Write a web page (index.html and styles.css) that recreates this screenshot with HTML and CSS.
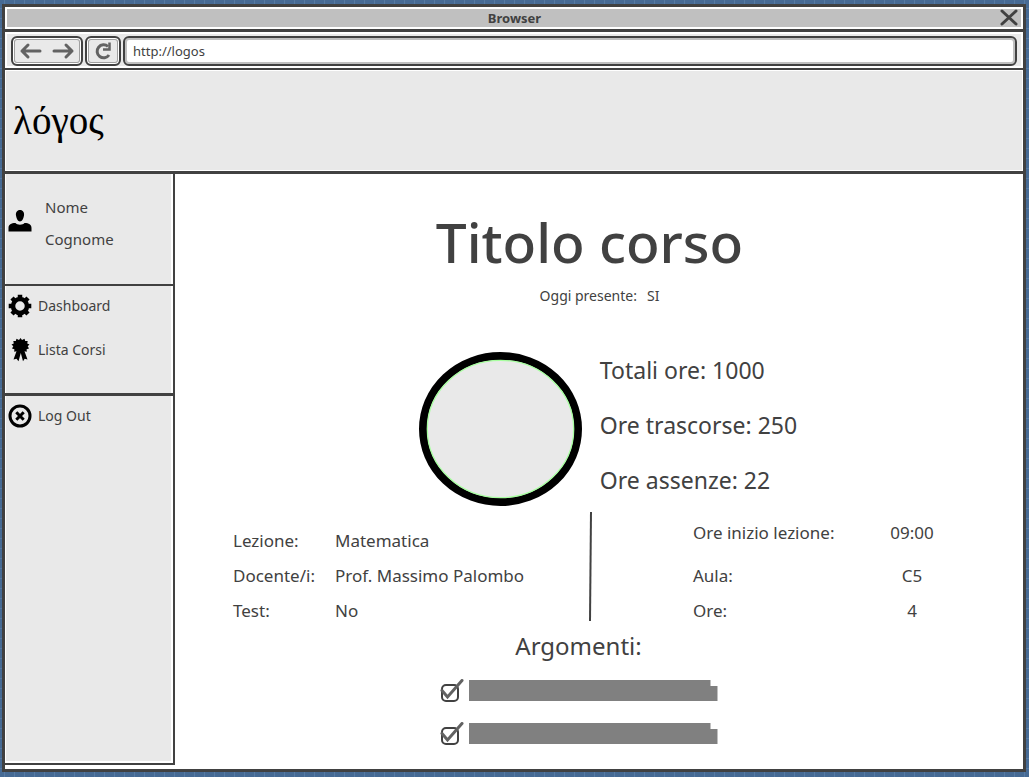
FILE: index.html
```html
<!DOCTYPE html>
<html lang="it">
<head>
<meta charset="utf-8">
<meta name="viewport" content="width=device-width, initial-scale=1">
<title>λόγος</title>
<link rel="stylesheet" href="styles.css">
</head>
<body>
<div class="window">
  <div class="titlebar">
    <span class="titlebar-text">Browser</span>
    <button class="close" type="button" aria-label="Chiudi">
      <svg width="18" height="18" viewBox="0 0 18 18"><path d="M2 2L16 15M16 2L2 15" fill="none" stroke="#414141" stroke-width="3" stroke-linecap="round"/></svg>
    </button>
  </div>
  <div class="toolbar">
    <div class="tool-box">
      <button class="tool" type="button" aria-label="Indietro">
        <svg width="24" height="18" viewBox="0 0 24 18"><path d="M21 9H3M9 3L3 9L9 15" fill="none" stroke="#626262" stroke-width="3" stroke-linecap="round" stroke-linejoin="round"/></svg>
      </button>
      <button class="tool" type="button" aria-label="Avanti">
        <svg width="24" height="18" viewBox="0 0 24 18"><path d="M3 9H21M15 3L21 9L15 15" fill="none" stroke="#626262" stroke-width="3" stroke-linecap="round" stroke-linejoin="round"/></svg>
      </button>
    </div>
    <div class="tool-box">
      <button class="tool" type="button" aria-label="Ricarica">
        <svg width="20" height="20" viewBox="0 0 20 20"><path d="M16 14A6.500 6.500 0 1 1 15 5.500" fill="none" stroke="#626262" stroke-width="3"/><path d="M16.500 1.500V8.500H10" fill="none" stroke="#626262" stroke-width="2.500"/></svg>
      </button>
    </div>
    <input class="address" type="text" value="http://logos" aria-label="Indirizzo">
  </div>
  <header class="site-header"><a class="logo" href="#">λόγος</a></header>
  <div class="page">
    <nav class="sidebar">
      <div class="user">
        <svg width="24" height="24" viewBox="0 0 24 24"><path d="M12 1C15 1 16.500 3.500 16 6.500C15.500 9.500 14 12.500 12 12.500S8.500 9.500 8 6.500C7.500 3.500 9 1 12 1ZM.5 22.500V19C.5 15.500 3 14 7.500 14C9 16.200 15 16.200 16.500 14C21 14 23.500 15.500 23.500 19V22.500Z"/></svg>
        <p class="user-name">Nome<br>Cognome</p>
      </div>
      <div class="links">
        <a class="link" href="#">
          <svg width="24" height="24" viewBox="0 0 24 24"><g fill="none" stroke="#000"><circle cx="12" cy="12" r="7" stroke-width="4.500"/><path d="M12 .7V4M12 20V23.300M.7 12H4M20 12H23.300M4 4L6.500 6.500M17.500 17.500L20 20M4 20L6.500 17.500M17.500 6.500L20 4" stroke-width="4.500"/></g></svg>
          Dashboard
        </a>
        <a class="link" href="#">
          <svg width="24" height="24" viewBox="0 0 24 24"><path d="M12.500 0L14 2L16.500 .8L17.200 3L19.700 3L19.200 5.400L21.500 6.500L19.700 8.300L21 10.500L18.600 11.300L18.800 13.800L16.500 13.300L19.500 21.500L16.700 20.800L15 23.300L12.800 15L10.500 23.300L8.500 20.800L5.500 21.500L8.500 13.300L6.200 13.800L6.400 11.300L4 10.500L5.300 8.300L3.500 6.500L5.800 5.400L5.300 3L7.800 3L8.500 .8L11 2Z"/></svg>
          Lista Corsi
        </a>
      </div>
      <div class="links links-exit">
        <a class="link" href="#">
          <svg width="24" height="24" viewBox="0 0 24 24"><g fill="none" stroke="#000" stroke-width="3"><circle cx="12" cy="12" r="10"/><path d="M8.300 8.300L15.700 15.700M15.700 8.300L8.300 15.700"/></g></svg>
          Log Out
        </a>
      </div>
    </nav>
    <main class="content">
      <h1 class="title">Titolo corso</h1>
      <p class="presence"><span>Oggi presente:</span><span>SI</span></p>
      <section class="summary">
        <svg class="chart" width="163" height="154" viewBox="0 0 163 154" role="img" aria-label="Ore"><ellipse cx="81.500" cy="77" rx="77.500" ry="73" fill="#e9e9e9" stroke="#000" stroke-width="8"/><ellipse cx="81.500" cy="77" rx="73.200" ry="68.700" fill="none" stroke="#a8ffa0" stroke-width="1.300"/></svg>
        <ul class="stats">
          <li>Totali ore: 1000</li>
          <li>Ore trascorse: 250</li>
          <li>Ore assenze: 22</li>
        </ul>
      </section>
      <section class="details">
        <dl class="facts">
          <dt>Lezione:</dt><dd>Matematica</dd>
          <dt>Docente/i:</dt><dd>Prof. Massimo Palombo</dd>
          <dt>Test:</dt><dd>No</dd>
        </dl>
        <svg class="divider" width="6" height="109" viewBox="0 0 6 109"><path d="M4 0L3 109" stroke="#414141" stroke-width="2"/></svg>
        <dl class="facts facts-time">
          <dt>Ore inizio lezione:</dt><dd>09:00</dd>
          <dt>Aula:</dt><dd>C5</dd>
          <dt>Ore:</dt><dd>4</dd>
        </dl>
      </section>
      <section class="topics">
        <h2 class="topics-title">Argomenti:</h2>
        <label class="topic">
          <span class="check"><input class="check-box" type="checkbox" checked aria-label="Argomento 1"><svg class="tick" width="24" height="22" viewBox="0 0 24 22"><path d="M2 11.500L7.500 18L22 1.500" fill="none" stroke="#626262" stroke-width="3" stroke-linecap="round"/></svg></span>
          <span class="bar"></span>
        </label>
        <label class="topic">
          <span class="check"><input class="check-box" type="checkbox" checked aria-label="Argomento 2"><svg class="tick" width="24" height="22" viewBox="0 0 24 22"><path d="M2 11.500L7.500 18L22 1.500" fill="none" stroke="#626262" stroke-width="3" stroke-linecap="round"/></svg></span>
          <span class="bar"></span>
        </label>
      </section>
    </main>
  </div>
</div>
</body>
</html>
```

FILE: styles.css
```css
:root {
  --ink: #414141;
  --panel: #e9e9e9;
}

* {
  box-sizing: border-box;
}

body {
  margin: 0;
  min-height: 100vh;
  display: flex;
  padding: 4px 3px 5px 2px;
  color: var(--ink);
  font-family: "Comic Sans MS", "Noto Sans", sans-serif;
  font-size: 17px;
  background-color: #466a94;
  background-image:
    linear-gradient(90deg, transparent 4px, #567aa3 4px, #567aa3 5px, transparent 5px),
    linear-gradient(transparent 8px, #567aa3 8px, #567aa3 9px, transparent 9px);
  background-size: 10px 10px;
}

p, h1, h2, ul, dl, dd {
  margin: 0;
  padding: 0;
}

h1, h2 {
  font-weight: 400;
}

button {
  padding: 0;
  border: 0;
  background: none;
  font: inherit;
}

svg {
  display: block;
  flex: none;
}

.window {
  flex: 1;
  display: flex;
  flex-direction: column;
  border: 3px solid var(--ink);
  background: #fff;
}

.titlebar {
  display: flex;
  align-items: center;
  height: 25px;
  border-bottom: 3px solid var(--ink);
  background: #c0c0c0;
  box-shadow: inset 0 0 0 2px #fff;
}

.titlebar-text {
  flex: 1;
  padding-left: 24px;
  text-align: center;
  font-size: 13px;
  line-height: 22px;
  font-weight: 700;
}

.close {
  margin-right: 5px;
}

.toolbar {
  display: flex;
  gap: 2px;
  padding: 4px 6px 2px;
  border-bottom: 2px solid var(--ink);
  background: var(--panel);
  box-shadow: inset 0 0 0 2px #fff;
}

.tool-box {
  display: flex;
  align-items: center;
  gap: 8px;
  height: 30px;
  padding: 0 6px;
  border: 2px solid var(--ink);
  border-radius: 6px;
  box-shadow: inset 0 0 0 1px #fff, inset 0 0 0 2px #a0a0a0;
}

.address {
  flex: 1;
  min-width: 0;
  height: 30px;
  padding: 0 8px;
  border: 2px solid var(--ink);
  border-radius: 6px;
  box-shadow: inset 0 0 0 2px #c0c0c0;
  background: #fff;
  color: var(--ink);
  font-family: inherit;
  font-size: 13px;
}

.site-header {
  display: flex;
  align-items: center;
  height: 104px;
  padding: 0 8px;
  border-bottom: 3px solid var(--ink);
  background: var(--panel);
  box-shadow: inset 0 0 0 1px #fff;
}

.logo {
  color: #000;
  font-family: "Liberation Serif", serif;
  font-size: 39px;
  line-height: 40px;
  text-decoration: none;
}

.page {
  flex: 1;
  display: flex;
}

.sidebar {
  flex: none;
  width: 170px;
  margin-bottom: 4px;
  border-right: 2px solid var(--ink);
  border-bottom: 2px solid var(--ink);
  background: var(--panel);
  box-shadow: inset 1px 0 #fff, inset -2px -2px #fff;
}

.user {
  display: flex;
  gap: 13px;
  height: 112px;
  padding: 17px 3px;
  border-bottom: 2px solid var(--ink);
  font-size: 15px;
  line-height: 32px;
}

.user svg {
  margin-top: 18px;
}

.links {
  display: flex;
  flex-direction: column;
  gap: 20px;
  padding: 8px 3px 31px;
  border-bottom: 3px solid var(--ink);
}

.links-exit {
  border-bottom: 0;
}

.link {
  display: flex;
  align-items: center;
  gap: 6px;
  color: inherit;
  font-size: 14px;
  line-height: 24px;
  text-decoration: none;
}

.content {
  flex: 1;
  padding: 30px 19px 24px 0;
}

.title {
  font-size: 55px;
  line-height: 76px;
  font-weight: 500;
  text-align: center;
}

.presence {
  display: flex;
  justify-content: center;
  gap: 10px;
  margin-top: 6px;
  padding-left: 20px;
  font-size: 14px;
  line-height: 20px;
}

.summary {
  display: flex;
  justify-content: center;
  gap: 18px;
  margin-top: 37px;
  padding-left: 37px;
}

.chart {
  margin-top: 9px;
}

.stats {
  list-style: none;
  font-size: 23px;
  line-height: 55px;
}

.details {
  display: flex;
  justify-content: space-between;
  padding: 0 50px 0 58px;
  font-size: 17px;
  line-height: 35px;
}

.facts {
  display: grid;
  grid-template-columns: 102px 1fr;
  flex: 0 0 354px;
  padding-top: 15px;
}

.facts-time {
  grid-template-columns: 1fr 84px;
  flex-basis: 261px;
  padding-top: 7px;
}

.facts-time dd {
  text-align: center;
}

.facts-time dt:first-of-type {
  padding-bottom: 8px;
}

.divider {
  margin: 4px 100px 0 0;
}

.topics {
  display: flex;
  flex-direction: column;
  align-items: center;
  gap: 22px;
  padding-right: 22px;
}

.topics-title {
  margin-bottom: -6px;
  font-size: 24px;
  line-height: 36px;
}

.topic {
  display: flex;
  gap: 5px;
}

.check {
  position: relative;
  width: 24px;
  height: 21px;
}

.check-box {
  appearance: none;
  display: block;
  width: 18px;
  height: 18px;
  margin: 4px 0 0 1px;
  border: 2px solid var(--ink);
  border-radius: 5px;
  background: #fff;
}

.tick {
  position: absolute;
  top: -1px;
  left: 0;
}

.bar {
  width: 249px;
  height: 21px;
  background: #808080;
  clip-path: polygon(0 0, 242px 0, 242px 6px, 100% 6px, 100% 100%, 0 100%);
}
```
